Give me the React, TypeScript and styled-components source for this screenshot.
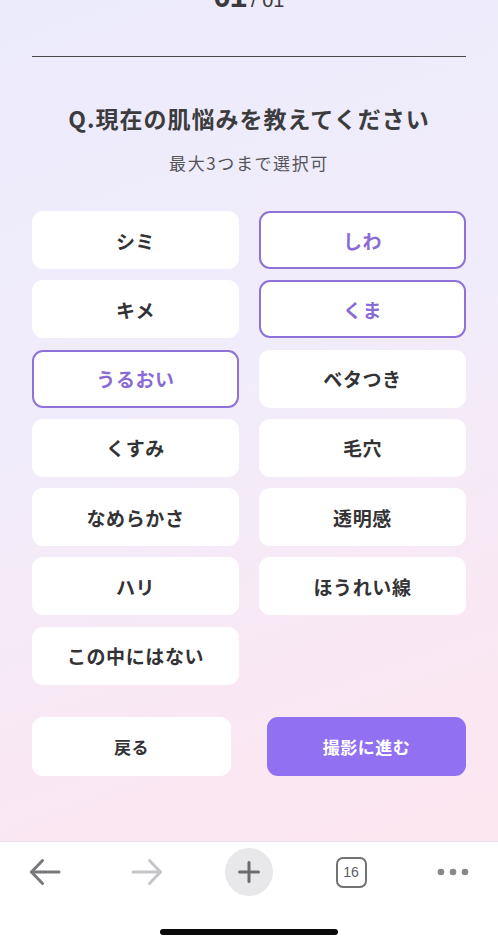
import React, { useState } from 'react';
import styled, { createGlobalStyle } from 'styled-components';

const GlobalStyle = createGlobalStyle`
  html, body {
    margin: 0;
    padding: 0;
  }
  body {
    font-family: 'Noto Sans CJK JP', 'Noto Sans', sans-serif;
    color: #333;
  }
  * {
    box-sizing: border-box;
  }
`;

const Screen = styled.div`
  width: 100%;
  height: 946px;
  display: flex;
  flex-direction: column;
  overflow: hidden;
`;

const Content = styled.main`
  flex: 1;
  display: flex;
  flex-direction: column;
  align-items: stretch;
  padding: 0 32px;
  background: linear-gradient(160deg, #ecebfc 0%, #f1ecfb 45%, #f9e8f4 75%, #fce6f0 100%);
  overflow: hidden;
`;

/* page is scrolled a bit, so the step counter is cut at the top */
const Step = styled.div`
  margin-top: -21px;
  height: 32px;
  display: flex;
  justify-content: center;
  align-items: baseline;
  gap: 5px;
  color: #3a3a3c;
  font-family: 'Liberation Sans', Arial, sans-serif;
`;

const StepCurrent = styled.span`
  font-size: 31px;
  font-weight: 700;
  letter-spacing: -1px;
`;

const StepTotal = styled.span`
  font-size: 20px;
`;

const Divider = styled.hr`
  margin: 45px 0 0 0;
  border: none;
  border-top: 1px solid #48484c;
`;

const Title = styled.h1`
  margin: 44px 0 0 0;
  text-align: center;
  font-size: 23px;
  line-height: 34px;
  font-weight: 700;
  letter-spacing: 1px;
  color: #3c3c3e;
`;

const Note = styled.p`
  margin: 16px 0 0 0;
  text-align: center;
  font-size: 17px;
  line-height: 24px;
  letter-spacing: 1.6px;
  color: #555558;
`;

const Options = styled.div`
  margin-top: 36px;
  display: grid;
  grid-template-columns: 1fr 1fr;
  column-gap: 20px;
  row-gap: 11.3px;
`;

const Option = styled.button<{ $selected: boolean }>`
  height: 58px;
  border-radius: 11px;
  background: #ffffff;
  border: 2px solid ${p => (p.$selected ? '#8e72d9' : 'transparent')};
  color: ${p => (p.$selected ? '#8a6bd6' : '#333335')};
  font-family: inherit;
  font-size: 19px;
  font-weight: 700;
  letter-spacing: 0.6px;
  cursor: pointer;
  padding: 0;
`;

const Actions = styled.div`
  margin-top: 32px;
  display: flex;
  gap: 36px;
`;

const ActionButton = styled.button<{ $primary?: boolean }>`
  flex: 1;
  height: 59px;
  border-radius: 11px;
  border: none;
  background: ${p => (p.$primary ? '#9170f2' : '#ffffff')};
  color: ${p => (p.$primary ? '#ffffff' : '#333335')};
  font-family: inherit;
  font-size: 17px;
  font-weight: 700;
  letter-spacing: 0.5px;
  cursor: pointer;
`;

const Toolbar = styled.nav`
  height: 105px;
  flex-shrink: 0;
  background: #ffffff;
  border-top: 1px solid #ebdfe9;
  display: flex;
  flex-direction: column;
  align-items: center;
`;

const ToolRow = styled.div`
  width: 100%;
  height: 60px;
  display: grid;
  grid-template-columns: repeat(5, 102px);
  justify-content: center;
  align-items: center;
  justify-items: center;
`;

const ToolButton = styled.button<{ $circle?: boolean }>`
  width: 48px;
  height: 48px;
  border: none;
  padding: 0;
  border-radius: 50%;
  background: ${p => (p.$circle ? '#e8e8eb' : 'transparent')};
  display: flex;
  align-items: center;
  justify-content: center;
`;

const TabCount = styled.span`
  width: 31px;
  height: 31px;
  border: 2.5px solid #717176;
  border-radius: 7px;
  display: flex;
  align-items: center;
  justify-content: center;
  font-family: 'Liberation Sans', Arial, sans-serif;
  font-size: 14px;
  color: #5e5e62;
`;

const HomeBar = styled.div`
  margin-top: 27px;
  width: 178px;
  height: 6px;
  border-radius: 3px;
  background: #0a0a0a;
`;

const ArrowIcon = ({ dir, color }: { dir: 'left' | 'right'; color: string }) => (
  <svg width="32" height="28" viewBox="0 0 32 28" fill="none" stroke={color} strokeWidth="3" strokeLinecap="round" strokeLinejoin="round">
    {dir === 'left' ? (
      <>
        <path d="M30 14H2.5" />
        <path d="M13.5 2.5L2.5 14L13.5 25.5" />
      </>
    ) : (
      <>
        <path d="M2 14H29.5" />
        <path d="M18.5 2.5L29.5 14L18.5 25.5" />
      </>
    )}
  </svg>
);

const PlusIcon = () => (
  <svg width="24" height="24" viewBox="0 0 24 24" fill="none" stroke="#6c6c70" strokeWidth="3" strokeLinecap="round">
    <path d="M12 2.5V21.5" />
    <path d="M2.5 12H21.5" />
  </svg>
);

const DotsIcon = () => (
  <svg width="32" height="8" viewBox="0 0 32 8" fill="#88888c">
    <circle cx="4" cy="4" r="3.3" />
    <circle cx="16" cy="4" r="3.3" />
    <circle cx="28" cy="4" r="3.3" />
  </svg>
);

const OPTIONS = [
  'シミ',
  'しわ',
  'キメ',
  'くま',
  'うるおい',
  'ベタつき',
  'くすみ',
  '毛穴',
  'なめらかさ',
  '透明感',
  'ハリ',
  'ほうれい線',
  'この中にはない',
];

export default function App() {
  const [selected, setSelected] = useState<string[]>(['しわ', 'くま', 'うるおい']);

  const toggle = (label: string) => {
    setSelected(prev => {
      if (prev.includes(label)) return prev.filter(l => l !== label);
      if (prev.length >= 3) return prev;
      return [...prev, label];
    });
  };

  return (
    <>
      <GlobalStyle />
      <Screen>
        <Content>
          <Step>
            <StepCurrent>01</StepCurrent>
            <StepTotal>/ 01</StepTotal>
          </Step>
          <Divider />
          <Title>Q.現在の肌悩みを教えてください</Title>
          <Note>最大3つまで選択可</Note>
          <Options>
            {OPTIONS.map(label => (
              <Option key={label} $selected={selected.includes(label)} onClick={() => toggle(label)}>
                {label}
              </Option>
            ))}
          </Options>
          <Actions>
            <ActionButton>戻る</ActionButton>
            <ActionButton $primary>撮影に進む</ActionButton>
          </Actions>
        </Content>
        <Toolbar>
          <ToolRow>
            <ToolButton>
              <ArrowIcon dir="left" color="#77777c" />
            </ToolButton>
            <ToolButton>
              <ArrowIcon dir="right" color="#c6c6ca" />
            </ToolButton>
            <ToolButton $circle>
              <PlusIcon />
            </ToolButton>
            <ToolButton>
              <TabCount>16</TabCount>
            </ToolButton>
            <ToolButton>
              <DotsIcon />
            </ToolButton>
          </ToolRow>
          <HomeBar />
        </Toolbar>
      </Screen>
    </>
  );
}
